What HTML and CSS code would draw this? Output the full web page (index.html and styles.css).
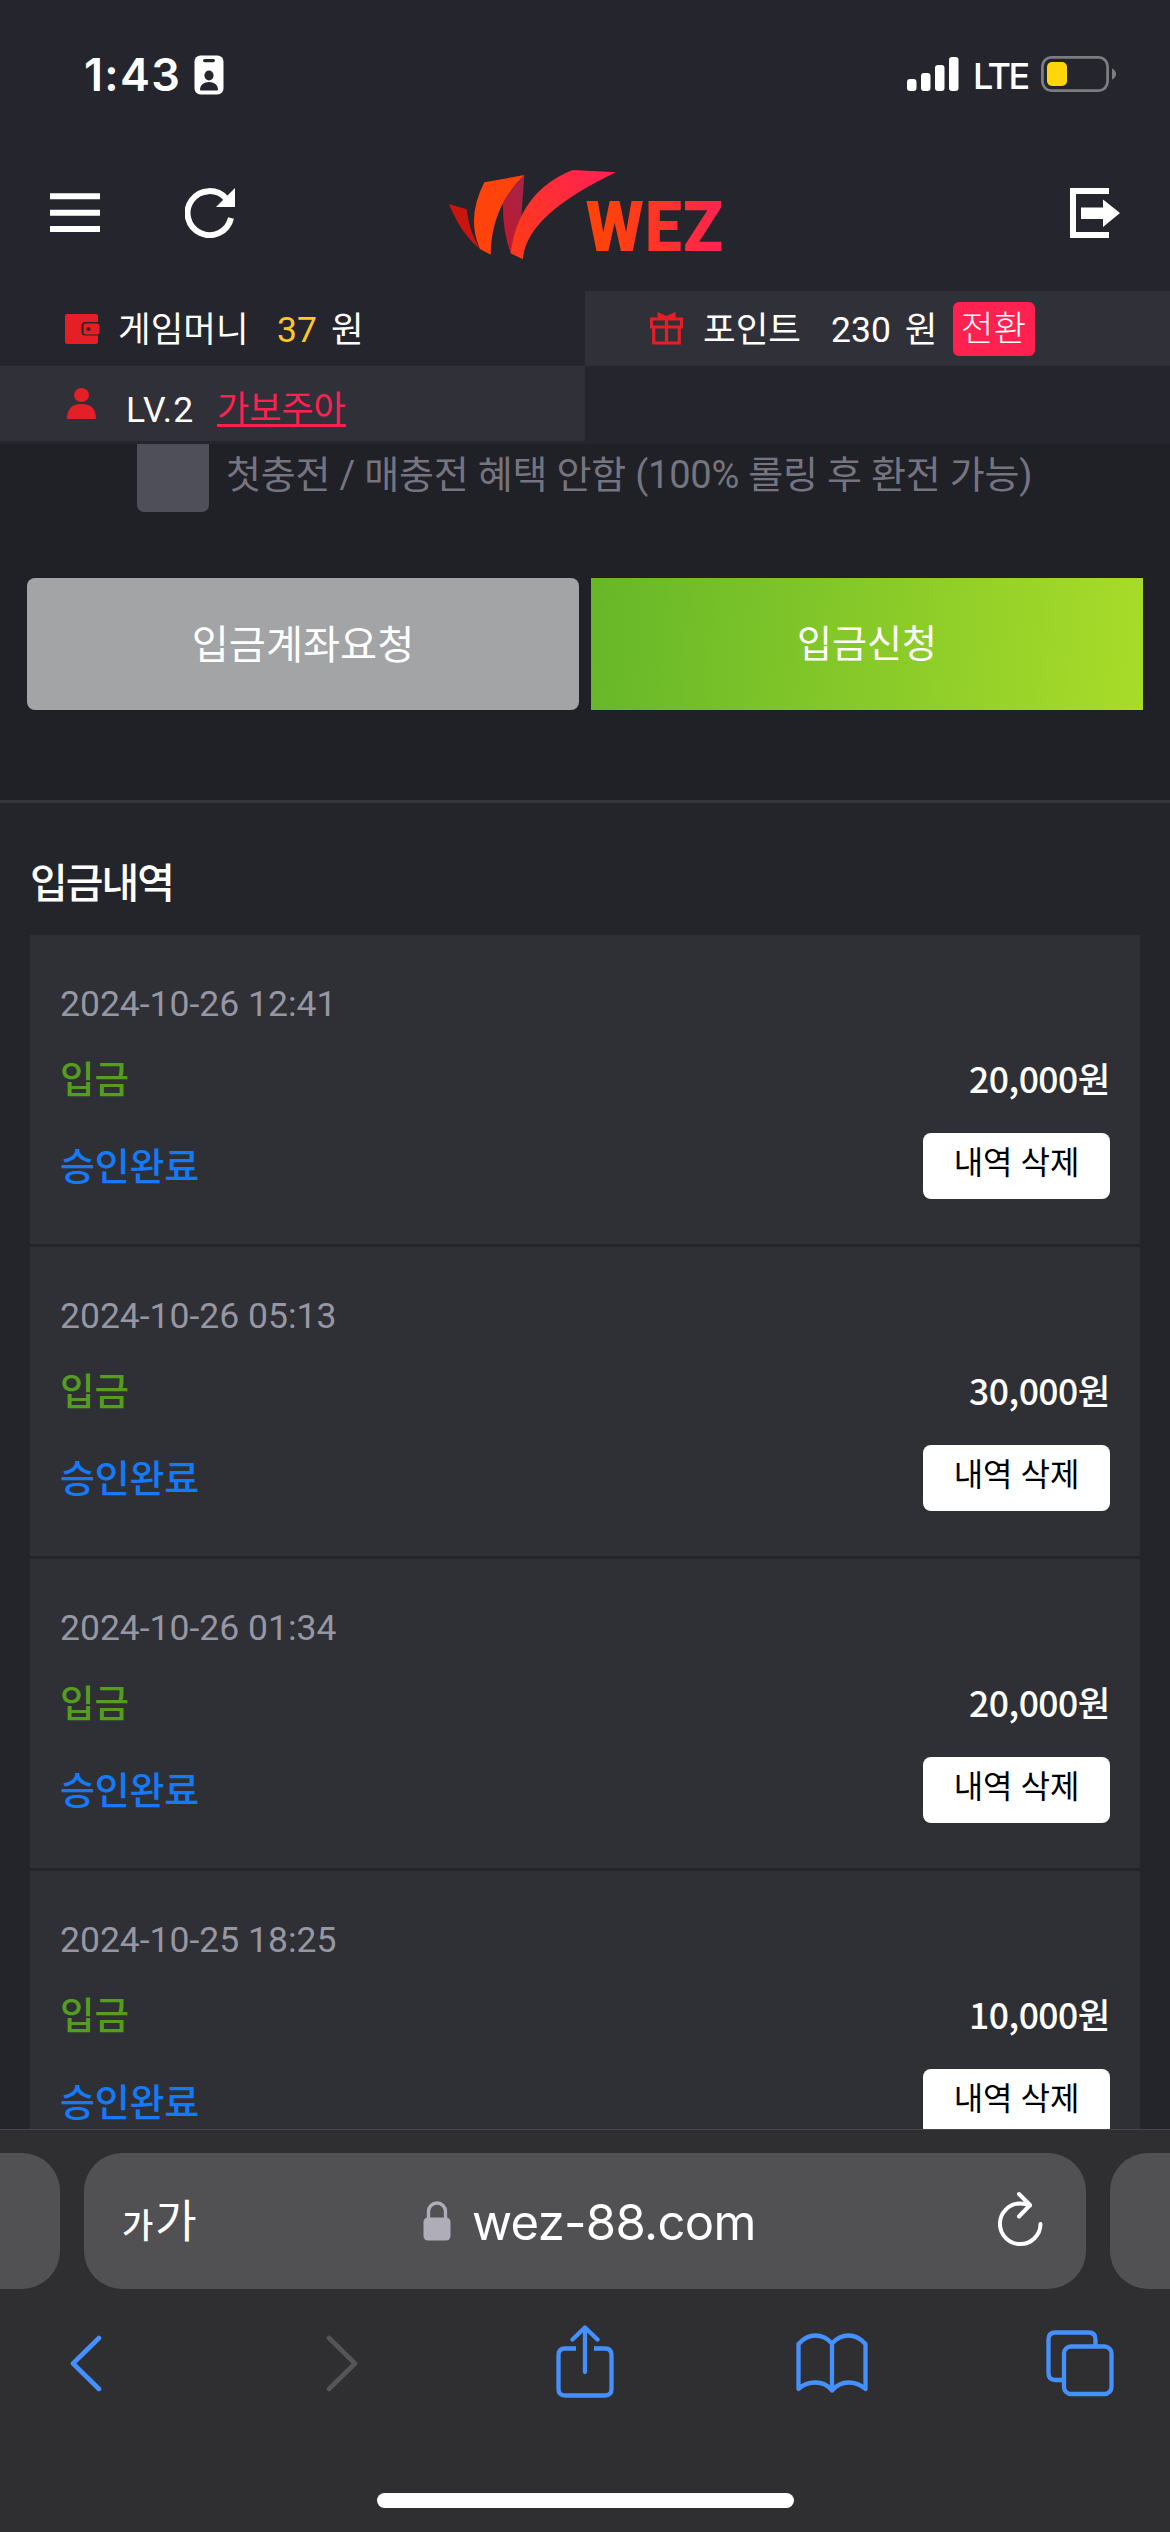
FILE: index.html
```html
<!DOCTYPE html>
<html lang="ko">
<head>
<meta charset="utf-8">
<title>입금내역</title>
<link rel="stylesheet" href="styles.css">
</head>
<body>
<div class="screen">
  <div class="statusbar">
    <span class="clock">1:43</span>
    <svg class="badge-icon" width="30" height="40" viewBox="0 0 30 40"><rect x=".5" y=".5" width="29" height="39" rx="6" fill="#fff"/><rect x="9" y="4" width="12" height="3.2" rx="1.6" fill="#25252d"/><ellipse cx="15" cy="20.5" rx="4.6" ry="5" fill="#25252d"/><path d="M6 34.5c0-4.500 4-7.500 9-7.500s9 3 9 7.500q0 .9-1 .9H7q-1 0-1-.9z" fill="#25252d"/></svg>
    <svg class="signal" width="52" height="35" viewBox="0 0 52 35" fill="#fff"><rect x="0" y="22" width="9.500" height="12" rx="3"/><rect x="14" y="16" width="9.500" height="18" rx="3"/><rect x="28" y="8" width="9.500" height="26" rx="3"/><rect x="42" y="0" width="9.500" height="34" rx="3"/></svg>
    <span class="network">LTE</span>
    <svg class="battery" width="76" height="36" viewBox="0 0 76 36"><rect x="1.400" y="1.400" width="65.200" height="33.200" rx="9" fill="none" stroke="#7c7c81" stroke-width="2.800"/><rect x="6" y="6" width="20" height="24" rx="5" fill="#ffd60a"/><path d="M71 12.500q4 2 4 5.500t-4 5.500z" fill="#7c7c81"/></svg>
  </div>

  <header class="header">
    <svg class="menu-icon" width="50" height="40" viewBox="0 0 50 40" fill="#fff"><path d="M0 .2h50v6H0zM0 16.700h50v6H0zM0 33.100h50v6H0z"/></svg>
    <svg class="refresh-icon" width="50" height="51" viewBox="0 0 50 51"><path d="M41 11.500A22 22 0 1 0 46 31" fill="none" stroke="#fff" stroke-width="6"/><path d="M50 1v19H31z" fill="#fff"/></svg>
    <svg class="logo" width="310" height="130" viewBox="0 0 930 390">
      <defs>
        <linearGradient id="ribbon" gradientUnits="userSpaceOnUse" x1="200" y1="250" x2="500" y2="100"><stop offset="0" stop-color="#ff3c14"/><stop offset="1" stop-color="#ff234e"/></linearGradient>
        <linearGradient id="fold" x1="0" y1="1" x2=".4" y2="0"><stop offset="0" stop-color="#c2182b"/><stop offset="1" stop-color="#a92346"/></linearGradient>
        <linearGradient id="word" gradientUnits="userSpaceOnUse" x1="540" y1="0" x2="850" y2="0"><stop offset="0" stop-color="#ff420b"/><stop offset="1" stop-color="#ff254c"/></linearGradient>
      </defs>
      <path d="M57 162l53 16q7 66 40 119Q91 249 57 162z" fill="#ca140e"/>
      <path d="M163 97l120-22q-100 98-101 239l-32-17Q108 204 163 97z" fill="#ff430b"/>
      <path d="M283 75q-41 41-64 84q-2 80 23 151l32-110z" fill="url(#fold)"/>
      <path d="M428 60l130 7Q286 196 279 328l-37-18Q266 124 428 60z" fill="url(#ribbon)"/>
      <text class="logo-text" x="467" y="302" textLength="174" lengthAdjust="spacingAndGlyphs">W</text>
      <text class="logo-text" x="645" y="302" textLength="110" lengthAdjust="spacingAndGlyphs">E</text>
      <text class="logo-text" x="759" y="302" textLength="120" lengthAdjust="spacingAndGlyphs">Z</text>
    </svg>
    <svg class="logout-icon" width="50" height="50" viewBox="0 0 50 50" fill="#fff"><path d="M0 0h39v6H6v38h33v6H0z"/><path d="M11 19.500h22v-8L50 25 33 39v-8H11z"/></svg>
  </header>

  <div class="account">
    <div class="cell">
      <svg class="cell-icon" width="35" height="30" viewBox="0 0 35 30"><path d="M2 0h29q2 0 2 2v6H20q-3.500 0-3.500 3.500v6q0 4 3.500 4h13V28q0 2-2 2H2q-2 0-2-2V2Q0 0 2 0z" fill="#e41f26"/><rect x="18.500" y="9.500" width="16" height="11" rx="2.500" fill="#e41f26"/><circle cx="23.500" cy="15" r="2" fill="#25252d"/></svg>
      <span class="label money-label">게임머니</span><span class="value gold">37</span><span class="unit">원</span>
    </div>
    <div class="cell raised">
      <svg class="cell-icon" width="35" height="33" viewBox="0 0 35 33"><path d="M1.500 7h30v8h-30zM3.700 15h25.600v16H3.700zM16.500 7v24" fill="none" stroke="#e41f26" stroke-width="3.200"/><path d="M7.500 0l9 4 9-4v6h-18z" fill="#e41f26"/></svg>
      <span class="label point-label">포인트</span><span class="value">230</span><span class="unit">원</span><span class="convert">전환</span>
    </div>
    <div class="cell raised">
      <svg class="cell-icon" width="35" height="31" viewBox="0 0 35 31" fill="#e41f26"><ellipse cx="16.500" cy="7" rx="7.500" ry="7"/><path d="M2 31q0-15 14.500-15T31 31z"/></svg>
      <span class="level">LV.2</span><a class="nickname">가보주아</a>
    </div>
    <div class="cell"></div>
  </div>

  <main class="page">
    <section class="form">
      <label class="bonus"><span class="checkbox"></span><span class="bonus-text">첫충전 / 매충전 혜택 안함 (100% 롤링 후 환전 가능)</span></label>
      <div class="actions">
        <div class="action request">입금계좌요청</div>
        <div class="action submit">입금신청</div>
      </div>
    </section>
    <section class="history">
      <h2 class="title">입금내역</h2>
      <div class="list">
        <article class="card"><div class="date">2024-10-26 12:41</div><div class="line"><span class="kind">입금</span><span class="amount">20,000원</span></div><div class="line state-line"><span class="state">승인완료</span><span class="remove">내역 삭제</span></div></article>
        <article class="card"><div class="date">2024-10-26 05:13</div><div class="line"><span class="kind">입금</span><span class="amount">30,000원</span></div><div class="line state-line"><span class="state">승인완료</span><span class="remove">내역 삭제</span></div></article>
        <article class="card"><div class="date">2024-10-26 01:34</div><div class="line"><span class="kind">입금</span><span class="amount">20,000원</span></div><div class="line state-line"><span class="state">승인완료</span><span class="remove">내역 삭제</span></div></article>
        <article class="card"><div class="date">2024-10-25 18:25</div><div class="line"><span class="kind">입금</span><span class="amount">10,000원</span></div><div class="line state-line"><span class="state">승인완료</span><span class="remove">내역 삭제</span></div></article>
      </div>
    </section>
  </main>

  <footer class="browser">
    <div class="tabs">
      <div class="tab tab-prev"></div>
      <div class="tab address">
        <span class="textsize"><span class="small">가</span><span class="large">가</span></span>
        <span class="site">
          <svg width="28" height="40" viewBox="0 0 28 40"><rect x=".5" y="16.500" width="27" height="23" rx="4.500" fill="#aeadb8"/><path d="M5.500 18v-7.500a8.500 8.500 0 0 1 17 0V18" fill="none" stroke="#aeadb8" stroke-width="3.300"/></svg>
          <span class="url">wez-88.com</span>
        </span>
        <svg class="reload" width="46" height="56" viewBox="0 0 46 56" fill="none" stroke="#fff" stroke-width="4" stroke-linecap="round" stroke-linejoin="round"><path d="M33 14.500q-4-2-10-2a20.300 20.300 0 1 0 20.500 20.500M22 3l11 11-11 11.500"/></svg>
      </div>
      <div class="tab tab-next"></div>
    </div>
    <div class="toolbar">
      <svg class="back" width="33" height="57" viewBox="0 0 33 57" fill="none" stroke="#4590ff" stroke-width="4.600" stroke-linecap="round" stroke-linejoin="round"><path d="M29 3L3 28.500 29 54"/></svg>
      <svg class="forward" width="33" height="57" viewBox="0 0 33 57" fill="none" stroke="#555557" stroke-width="4.600" stroke-linecap="round" stroke-linejoin="round"><path d="M4 3l26 25.500L4 54"/></svg>
      <svg class="share" width="58" height="74" viewBox="0 0 58 74" fill="none" stroke="#4590ff" stroke-width="4.300" stroke-linecap="round" stroke-linejoin="round"><path d="M20 23.500h-11q-6.500 0-6.500 6.500v34q0 6.500 6.500 6.500h40q6.500 0 6.500-6.500V30q0-6.500-6.500-6.500H38" stroke-linecap="butt"/><path d="M29 47V3M16.500 14.500L29 2.500l12.500 12"/></svg>
      <svg class="book" width="72" height="60" viewBox="0 0 72 60" fill="none" stroke="#4590ff" stroke-width="4.300" stroke-linecap="round" stroke-linejoin="round"><path d="M36 57.500V10.500Q29 2.500 19.500 2.500T2.500 11V56Q9 49.500 19.500 49.500T36 57.500Q43 49.500 52.500 49.500T69.500 56V11Q62 2.500 52.500 2.500T36 10.500"/></svg>
      <svg class="windows" width="68" height="67" viewBox="0 0 68 67" fill="none" stroke="#4590ff" stroke-width="4.300"><rect x="18" y="16.500" width="47.500" height="47.500" rx="7"/><path d="M49.500 16V9.500q0-7-7-7H9.500q-7 0-7 7V43q0 7 7 7H17"/></svg>
    </div>
    <div class="home"></div>
  </footer>
</div>
</body>
</html>
```
FILE: styles.css
```css
* { box-sizing: border-box; }
body { margin: 0; background: #24252b; }
svg { display: block; flex: none; }
.screen {
  width: 1170px; height: 2532px; overflow: hidden;
  display: flex; flex-direction: column;
  color: #fff; background: #24252b;
  font: 400 36px/50px Roboto, "Noto Sans CJK KR", sans-serif;
  white-space: nowrap;
}

.statusbar { height: 150px; flex: none; display: flex; align-items: flex-start; background: #25252d; font-family: Inter, sans-serif; }
.clock { width: 110px; margin: 45px 0 0 84px; font-size: 45px; line-height: 60px; font-weight: 600; letter-spacing: 1.3px; }
.badge-icon { margin-top: 55px; }
.signal { margin: 57px 0 0 683px; }
.network { width: 69px; margin: 46px 0 0 12px; font-size: 36px; line-height: 60px; font-weight: 500; letter-spacing: -2.5px; padding-left: 2px; }
.battery { margin: 56px 0 0 1px; }

.header { height: 141px; flex: none; display: flex; align-items: flex-start; background: #25252d; padding-left: 50px; }
.menu-icon { margin-top: 43px; }
.refresh-icon { margin: 37px 0 0 85px; }
.logo { margin-left: 195px; }
.logo-text { font-family: Roboto, sans-serif; font-weight: 900; font-size: 213px; fill: url(#word); }
.logout-icon { margin: 38px 0 0 330px; }

.account { flex: none; height: 153px; display: grid; grid-template-columns: 585px 585px; grid-template-rows: 75px 75px; background: #25252d; line-height: 72px; font-size: 35.5px; }
.cell { display: flex; align-items: center; padding-left: 65px; }
.raised { background: #303038; }
.label { padding-top: 3px; }
.money-label { width: 159px; margin-left: 18px; }
.point-label { width: 128px; margin-left: 18px; }
.value, .unit { padding-top: 3px; }
.gold { color: #ffc62a; }
.unit { margin-left: 14px; }
.convert { margin-left: 15px; width: 82px; height: 54px; border-radius: 6px; background: #ff2251; font-weight: 300; line-height: 54px; text-align: center; }
.level { margin-left: 26px; padding-top: 12px; width: 91px; letter-spacing: 1px; }
.nickname { padding-top: 12px; color: #ff2251; font-size: 35px; text-decoration: underline; text-decoration-thickness: 3px; text-underline-offset: 3px; text-decoration-skip-ink: none; }

.page { flex: none; height: 1685px; overflow: hidden; }
.form { height: 359px; background: #202126; border-bottom: 3px solid #35353c; }
.bonus { display: flex; height: 134px; padding-left: 137px; color: #757480; }
.checkbox { width: 72px; height: 68px; border-radius: 0 0 7px 7px; background: #4f4f5a; }
.bonus-text { margin-left: 17px; font-size: 38px; line-height: 62px; letter-spacing: -.2px; }
.actions { display: flex; gap: 12px; padding: 0 27px; }
.action { flex: 1; height: 132px; line-height: 133px; text-align: center; font-size: 38px; }
.request { background: #a3a4a6; border-radius: 8px; font-size: 40.3px; line-height: 135px; }
.submit { background: linear-gradient(95deg, #66b729, #a9dc29); }

.history { padding: 45px 30px 0; }
.title { margin: 0; height: 87px; font-size: 41px; line-height: 73px; font-weight: 500; letter-spacing: -2px; }
.list { display: flex; flex-direction: column; gap: 3px; }
.card { height: 309px; padding: 42px 30px 0; background: #2f3035; }
.date { color: #9796a3; font-size: 35.5px; line-height: 54px; }
.line { display: flex; justify-content: space-between; height: 102px; line-height: 99px; }
.state-line { height: 66px; }
.kind { color: #549d20; font-weight: 500; font-size: 37.500px; }
.state { color: #167af7; font-weight: 500; font-size: 38px; line-height: 69px; letter-spacing: -.2px; }
.amount { font-family: "Noto Sans CJK KR", sans-serif; font-weight: 500; font-size: 35.5px; line-height: 94px; letter-spacing: -.5px; }
.remove { width: 187px; height: 66px; border-radius: 8px; background: #fff; color: #000; font-size: 32px; line-height: 61px; text-align: center; }

.browser { flex: none; height: 403px; border-top: 1px solid #49474e; background: #2f2f32; display: flex; flex-direction: column; }
.tabs { display: grid; grid-template-columns: 60px 1002px 60px; gap: 24px; padding-top: 23px; }
.tab { height: 136px; background: #515154; border-radius: 38px; }
.tab-prev { border-radius: 0 38px 38px 0; }
.tab-next { border-radius: 38px 0 0 38px; }
.address { display: flex; align-items: flex-start; }
.textsize { width: 339px; padding: 40px 0 0 38px; font-weight: 500; line-height: 60px; }
.small { font-size: 34px; }
.large { font-size: 45px; margin-left: 2px; font-weight: 400; }
.site { width: 490px; padding-top: 48px; display: flex; }
.url { margin: -11px 0 0 21px; font: 400 49px/66px Inter, sans-serif; letter-spacing: -.7px; }
.reload { margin: 38px 0 0 84px; }
.toolbar { display: flex; align-items: flex-start; height: 204px; padding: 36px 0 0 70px; }
.back, .forward { margin-top: 10px; }
.forward { margin-left: 222px; }
.share { margin-left: 198px; }
.book { margin: 8px 0 0 182px; }
.windows { margin: 5px 0 0 178px; }
.home { width: 417px; height: 15px; border-radius: 8px; margin-left: 377px; background: #fff; }
```
